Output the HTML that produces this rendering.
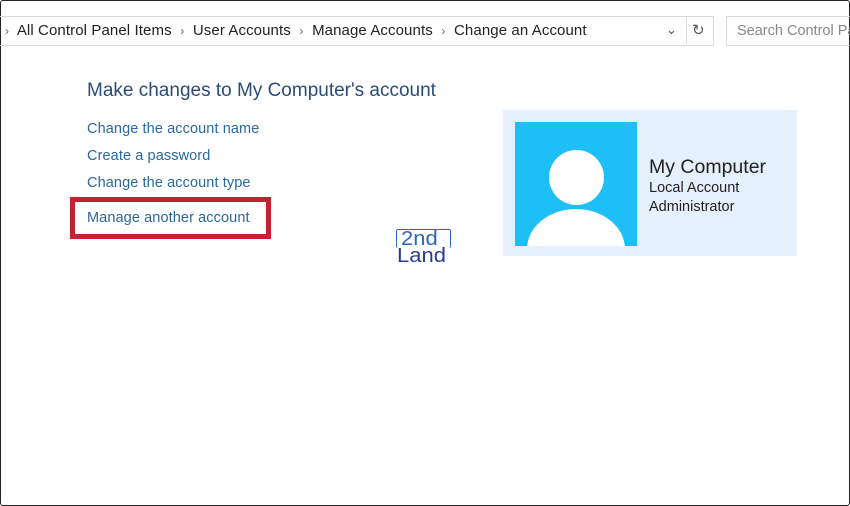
<!DOCTYPE html>
<html><head><style>
html,body{margin:0;padding:0}
body{width:850px;height:506px;position:relative;background:#fff;font-family:"Liberation Sans",sans-serif;overflow:hidden}
.frame{position:absolute;left:0;top:0;width:848px;height:504px;border:1px solid #222;border-radius:3px}
.addr{position:absolute;left:0;top:16px;width:713px;height:28px;border:1px solid #d9d9d9;border-left:none}
.bc{position:absolute;top:22px;font-size:15px;color:#222;white-space:nowrap;letter-spacing:0.1px}
.sep{color:#666;font-size:12px}
.search{position:absolute;left:726px;top:16px;width:130px;height:28px;border:1px solid #d9d9d9}
.search span{position:absolute;left:10px;top:6px;font-size:14.5px;color:#888;white-space:nowrap}
.t{position:absolute;white-space:nowrap}
.h{left:87px;top:80px;font-size:19px;color:#2b4c78}
.l{left:87px;font-size:14.5px;color:#2a67a0;letter-spacing:0.1px}
.red{position:absolute;left:70px;top:197px;width:191px;height:32px;border:5px solid #c81f33}
.panel{position:absolute;left:503px;top:110px;width:294px;height:146px;background:#e4f0fb}
.av{position:absolute;left:515px;top:122px;width:122px;height:124px;background:#1ebff7;overflow:hidden}
.logo{position:absolute;font-size:20px;line-height:18px;transform-origin:0 0;transform:scaleX(1.1)}
</style></head><body>
<div class="frame"></div>
<div class="addr"></div>
<div class="bc" style="left:5px"><span class="sep">›</span>&nbsp; All Control Panel Items &nbsp;<span class="sep">›</span>&nbsp; User Accounts &nbsp;<span class="sep">›</span>&nbsp; Manage Accounts &nbsp;<span class="sep">›</span>&nbsp; Change an Account</div>
<div class="t" style="left:666px;top:22px;font-size:13px;color:#555">⌄</div>
<div style="position:absolute;left:686px;top:17px;width:1px;height:27px;background:#ddd"></div>
<div class="t" style="left:692px;top:21px;font-size:15px;color:#555">↻</div>
<div class="search"><span>Search Control Pa</span></div>
<div class="t h">Make changes to My Computer's account</div>
<div class="t l" style="top:121px">Change the account name</div>
<div class="t l" style="top:148px">Create a password</div>
<div class="t l" style="top:175px">Change the account type</div>
<div class="t l" style="top:210px">Manage another account</div>
<div class="red"></div>
<div class="panel"></div>
<div class="av">
<div style="position:absolute;left:34px;top:28px;width:55px;height:55px;border-radius:50%;background:#fff"></div>
<div style="position:absolute;left:12px;top:87px;width:98px;height:80px;border-radius:50%;background:#fff"></div>
</div>
<div class="t" style="left:649px;top:156px;font-size:19.5px;color:#222">My Computer</div>
<div class="t" style="left:649px;top:180px;font-size:14.5px;color:#222">Local Account</div>
<div class="t" style="left:649px;top:199px;font-size:14.5px;color:#222">Administrator</div>
<div style="position:absolute;left:396px;top:229px;width:53px;height:18px;border:1.5px solid #2b66b8;border-bottom:none;border-radius:2px"></div>
<div class="logo" style="left:401px;top:230px;color:#2b66b8">2nd</div>
<div class="logo" style="left:397px;top:247px;color:#2b3b8f">Land</div>
</body></html>
